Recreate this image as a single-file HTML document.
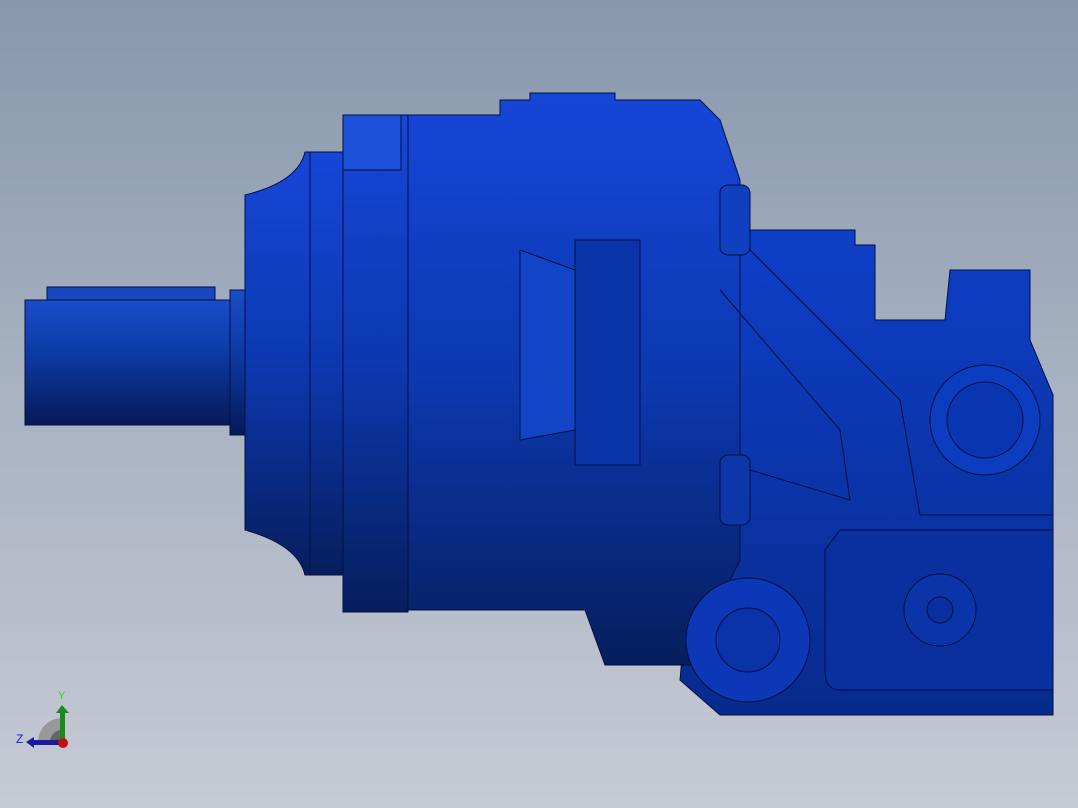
<!DOCTYPE html>
<html><head><style>
html,body{margin:0;padding:0;width:1078px;height:808px;overflow:hidden}
body{background:linear-gradient(#8797ad 0%,#a9b3c3 50%,#c6cad4 100%)}
</style></head><body>
<svg width="1078" height="808" viewBox="0 0 1078 808" xmlns="http://www.w3.org/2000/svg">
<defs>
<linearGradient id="g" x1="0" y1="0" x2="0" y2="1">
<stop offset="0" stop-color="#1646d8"/><stop offset="0.5" stop-color="#0c38b0"/><stop offset="1" stop-color="#071e5c"/></linearGradient>
<linearGradient id="s" x1="0" y1="0" x2="0" y2="1">
<stop offset="0" stop-color="#1a4cc8"/><stop offset="0.4" stop-color="#0d3ca8"/><stop offset="1" stop-color="#06195a"/></linearGradient>
<linearGradient id="r" x1="0" y1="0" x2="0" y2="1">
<stop offset="0" stop-color="#0f3fc8"/><stop offset="1" stop-color="#072a8c"/></linearGradient>
</defs>
<g stroke="#021040" stroke-width="1">
<rect x="47" y="287" width="168" height="16" fill="#1848c0"/>
<rect x="25" y="300" width="210" height="125" fill="url(#s)"/>
<rect x="230" y="290" width="16" height="145" fill="url(#s)"/>
<path d="M245 195 Q298 182 305 152 L312 152 L312 575 L305 575 Q298 545 245 530 Z" fill="url(#g)"/>
<rect x="310" y="152" width="35" height="423" fill="url(#g)"/>
<path d="M720 230 L855 230 L855 245 L875 245 L875 320 L945 320 L950 270 L1030 270 L1030 340 L1053 395 L1053 715 L720 715 L680 680 Z" fill="url(#r)"/>
<path d="M405 115 L500 115 L500 100 L530 100 L530 93 L615 93 L615 100 L700 100 L720 120 L740 180 L740 560 L720 600 L700 665 L605 665 L585 610 L405 610 Z" fill="url(#g)"/>
<rect x="343" y="115" width="65" height="497" fill="url(#g)"/>
<rect x="343" y="115" width="58" height="55" fill="#1c50d8"/>
<path d="M575 240 L640 240 L640 465 L575 465 Z" fill="#0a35a8"/>
<path d="M520 250 L575 270 L575 430 L520 440 Z" fill="#1244c8"/>
<rect x="720" y="185" width="30" height="70" rx="8" fill="#1040c0"/>
<rect x="720" y="455" width="30" height="70" rx="8" fill="#0d36a8"/>
<circle cx="748" cy="640" r="62" fill="#0c38b8"/>
<circle cx="748" cy="640" r="32" fill="#0a33aa"/>
<circle cx="985" cy="420" r="55" fill="#0c3cc0"/>
<circle cx="985" cy="420" r="38" fill="#0a35b0"/>
<path d="M840 530 L1053 530 L1053 690 L840 690 Q825 690 825 670 L825 550 Z" fill="#0a30a0"/>
<circle cx="940" cy="610" r="36" fill="#0b34a8"/>
<circle cx="940" cy="610" r="13" fill="#0a30a0"/>
<path d="M750 250 L900 400 L920 515 L1053 515" fill="none"/>
<path d="M720 290 L840 430 L850 500 L750 470" fill="none"/>
</g>
<path d="M38 742 A24 24 0 0 1 62 718 L62 742 Z" fill="#999"/>
<path d="M50 742 A12 12 0 0 1 62 730 L62 742 Z" fill="#666"/>
<rect x="60" y="712" width="5" height="30" fill="#1a8a1a"/><path d="M56 713 L62 705 L69 713 Z" fill="#1a8a1a"/>
<rect x="32" y="740" width="30" height="5" fill="#1a1aa0"/><path d="M34 737 L26 742 L34 748 Z" fill="#1a1aa0"/>
<circle cx="63" cy="743" r="5" fill="#c01010"/>
<text x="58" y="699" font-family="Liberation Sans,sans-serif" font-size="11" fill="#20e020">Y</text>
<text x="16" y="743" font-family="Liberation Sans,sans-serif" font-size="12" fill="#1a1ae0">Z</text>
</svg>
</body></html>
